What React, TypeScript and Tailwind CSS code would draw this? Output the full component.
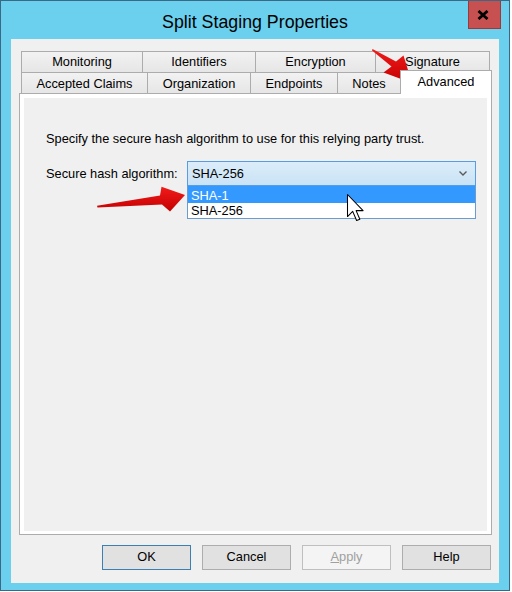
import React from "react";

const font = "font-['Liberation_Sans',Arial,sans-serif]";

function Tab({ label, w, last, low }: { label: string; w: string; last?: boolean; low?: boolean }) {
  return (
    <div
      className={`${w} h-full flex items-center justify-center border-t border-l ${last ? "border-r" : ""} ${low ? "pt-[3px]" : ""} border-[#acacac] bg-gradient-to-b from-[#f2f2f2] to-[#e6e6e6] text-[12.8px] leading-none text-black`}
    >
      {label}
    </div>
  );
}

function Btn({ children, kind }: { children: React.ReactNode; kind?: "default" | "disabled" }) {
  const cls =
    kind === "default"
      ? "border-[#3c7fb1] bg-[#e1e1e1] text-black"
      : kind === "disabled"
      ? "border-[#bfbfbf] bg-[#f4f4f4] text-[#a0a0a0]"
      : "border-[#adadad] bg-[#e1e1e1] text-black";
  return (
    <div className={`w-[89px] h-[25px] border ${cls} flex items-center justify-center text-[12.8px] leading-none`}>
      {children}
    </div>
  );
}

export default function App() {
  return (
    <div className={`relative w-[512px] h-[592px] bg-white ${font}`}>
      {/* Window */}
      <div className="w-[510px] h-[591px] border border-[#3b6985] bg-[#6bcfee] flex flex-col">
        {/* Title bar */}
        <div className="relative h-[38px] shrink-0 flex items-center justify-center pt-[5px]">
          <span className="text-[17.8px] leading-none text-black">Split Staging Properties</span>
          <div className="absolute top-0 right-[8px] w-[33px] h-[28px] bg-[#c75050] border border-t-0 border-[#9a3b3b] flex items-center justify-center pr-[3px]">
            <svg width="12" height="10" viewBox="0 0 12 10">
              <path d="M1.5 1 L10.5 9 M10.5 1 L1.5 9" stroke="#000" strokeWidth="2.8" strokeLinecap="butt" />
            </svg>
          </div>
        </div>

        {/* Client area */}
        <div className="mx-[10px] mb-[7px] h-[544px] bg-[#f0f0f0] flex flex-col pt-[12px] pl-[8px] pr-[7px]">
          {/* Tab strip */}
          <div className="pl-[2px] flex flex-col">
            <div className="flex h-[21px]">
              <Tab label="Monitoring" w="w-[121px]" />
              <Tab label="Identifiers" w="w-[113px]" />
              <Tab label="Encryption" w="w-[120px]" />
              <Tab label="Signature" w="w-[115px]" last />
            </div>
            <div className="flex h-[21px]">
              <Tab label="Accepted Claims" w="w-[126px]" low />
              <Tab label="Organization" w="w-[103px]" low />
              <Tab label="Endpoints" w="w-[87px]" low />
              <Tab label="Notes" w="w-[63px]" low />
              <div className="relative z-10 self-start -mt-[2px] w-[92px] h-[24px] bg-white border-t border-l border-r border-[#acacac] flex items-center justify-center pb-[1px] text-[12.8px] leading-none text-black">
                Advanced
              </div>
            </div>
          </div>

          {/* Panel */}
          <div className="w-[473px] h-[442px] border border-[#acacac] bg-white pt-[4px] px-[4px] pb-[3px]">
            <div className="h-full bg-[#f0f0f0] pt-[33px] pl-[22px] text-[12.8px] text-black">
              <div className="leading-[15px]">Specify the secure hash algorithm to use for this relying party trust.</div>
              <div className="mt-[15px] flex items-center">
                <div className="w-[141px] leading-[15px]">Secure hash algorithm:</div>
                <div className="relative w-[289px] h-[25px]">
                  <div className="w-full h-full border border-[#569de5] bg-gradient-to-b from-[#dcedf9] to-[#c9e3f6] flex items-center pl-[4px] pr-[8px]">
                    <span className="flex-1 leading-[15px]">SHA-256</span>
                    <svg width="8" height="5" viewBox="0 0 8 5">
                      <path d="M0.5 0.5 L4 4 L7.5 0.5" fill="none" stroke="#5a5a5a" strokeWidth="1.4" />
                    </svg>
                  </div>
                  <div className="absolute left-0 top-full w-full border border-t-0 border-[#6a9cd0] bg-white">
                    <div className="h-[17px] bg-[#3399ff] text-white flex items-center pl-[3px] pt-[1px] leading-[15px]">SHA-1</div>
                    <div className="h-[15px] bg-white text-black flex items-center pl-[3px] leading-[15px]">SHA-256</div>
                  </div>
                </div>
              </div>
            </div>
          </div>

          {/* Buttons */}
          <div className="mt-[10px] flex justify-end gap-[11px] pr-[1px]">
            <Btn kind="default">OK</Btn>
            <Btn>Cancel</Btn>
            <Btn kind="disabled">
              <span className="underline">A</span>pply
            </Btn>
            <Btn>Help</Btn>
          </div>
        </div>
      </div>

      {/* Annotations overlay */}
      <svg className="absolute inset-0 pointer-events-none" width="512" height="592" viewBox="0 0 512 592">
        <defs>
          <linearGradient id="rg" x1="0" y1="0" x2="0" y2="1">
            <stop offset="0" stopColor="#f21b1b" />
            <stop offset="1" stopColor="#c40000" />
          </linearGradient>
        </defs>
        <polygon
          points="97,205.8 160,195.5 161.5,186.8 185,195 170,211.5 162,204.5 97.5,207.6"
          fill="url(#rg)"
        />
        <polygon
          points="372.5,49 396,61.4 403.5,55.5 412,83 383.5,72.5 391.5,66.6 372,50.6"
          fill="url(#rg)"
        />
        <g transform="translate(347.5,194.5) scale(1.3)">
          <path
            d="M0 0 L0 17 L4 13 L7 20 L9.5 19 L6.6 12.4 L12 12.4 Z"
            fill="#fff"
            stroke="#000"
            strokeWidth="0.8"
            strokeLinejoin="round"
          />
        </g>
      </svg>
    </div>
  );
}
